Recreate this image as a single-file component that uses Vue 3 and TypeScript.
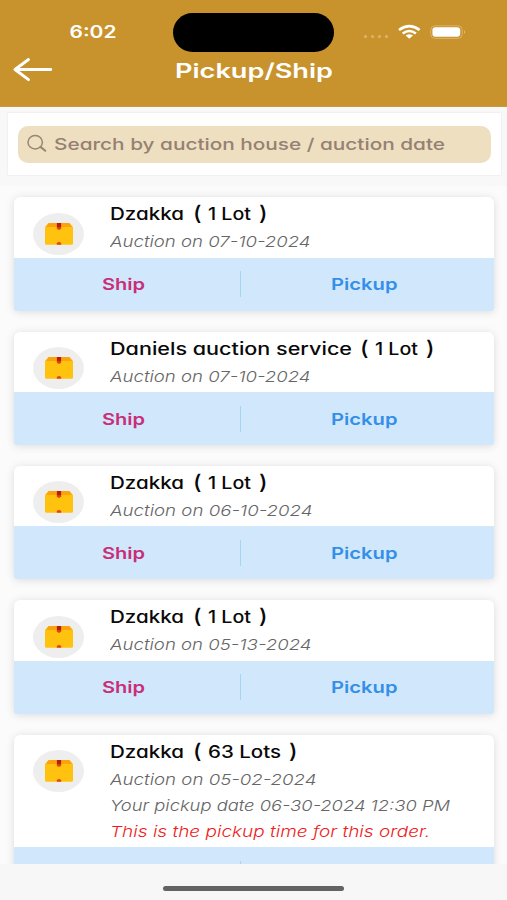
<script setup lang="ts">
interface Segment {
  text: string
  x: number
  width: number
  paren?: boolean
}
interface Line {
  text: string
  width: number
  alert?: boolean
}
interface Order {
  title: Segment[]
  lines: Line[]
  collapsed?: boolean
}

const oneLot = (x: number): Segment[] => [
  { text: '(', x, width: 8.5, paren: true },
  { text: '1 Lot', x: x + 15, width: 43 },
  { text: ')', x: x + 66, width: 8.5, paren: true },
]
const dzakka: Segment = { text: 'Dzakka', x: 0, width: 74 }

const orders: Order[] = [
  { title: [dzakka, ...oneLot(83)], lines: [{ text: 'Auction on 07-10-2024', width: 200.5 }] },
  {
    title: [{ text: 'Daniels auction service', x: 0, width: 242 }, ...oneLot(250)],
    lines: [{ text: 'Auction on 07-10-2024', width: 200.5 }],
  },
  { title: [dzakka, ...oneLot(83)], lines: [{ text: 'Auction on 06-10-2024', width: 202.5 }] },
  { title: [dzakka, ...oneLot(83)], lines: [{ text: 'Auction on 05-13-2024', width: 201.5 }] },
  {
    title: [
      dzakka,
      { text: '(', x: 83, width: 8.5, paren: true },
      { text: '63 Lots', x: 98, width: 73 },
      { text: ')', x: 179, width: 8.5, paren: true },
    ],
    lines: [
      { text: 'Auction on 05-02-2024', width: 206.5 },
      { text: 'Your pickup date 06-30-2024 12:30 PM', width: 340 },
      { text: 'This is the pickup time for this order.', width: 320, alert: true },
    ],
    collapsed: true,
  },
]
</script>

<template>
  <main class="screen">
    <header class="header">
      <div class="status">
        <svg class="clock" width="50" height="24">
          <text x="0.5" y="18" textLength="47" lengthAdjust="spacingAndGlyphs">6:02</text>
        </svg>
        <div class="island"></div>
        <svg class="indicators" width="106" height="24" viewBox="0 0 106 24">
          <g fill="#dcb468">
            <circle cx="3.5" cy="16.5" r="1.6" /><circle cx="10.5" cy="16.5" r="1.6" />
            <circle cx="17.5" cy="16.5" r="1.6" /><circle cx="24.5" cy="16.5" r="1.6" />
          </g>
          <g fill="none" stroke="#fff" stroke-width="2.6">
            <path d="M37 10Q47.3 2.4 57.6 10" />
            <path d="M40.7 13.6Q47.3 8.4 53.9 13.6" />
          </g>
          <path d="M43.6 15.6Q47.3 13 51 15.6L47.3 18.8Z" fill="#fff" />
          <rect x="68.8" y="5.8" width="31.4" height="12.6" rx="4" fill="none" stroke="#d9b369" />
          <rect x="70.4" y="7.2" width="27.8" height="9.6" rx="3" fill="#fff" />
          <path d="M102 10.2Q104.4 12 102 13.8Z" fill="#dfbd7e" />
        </svg>
      </div>
      <div class="nav">
        <svg class="back" width="42" height="28" viewBox="0 0 42 28">
          <path d="M16.5 3.5L3 13.5L16.5 23.7M3 13.5H38.8" fill="none" stroke="#fff" stroke-width="2.9" stroke-linecap="round" stroke-linejoin="round" />
        </svg>
        <svg class="heading" width="160" height="28">
          <text x="0" y="22" textLength="158" lengthAdjust="spacingAndGlyphs">Pickup/Ship</text>
        </svg>
      </div>
    </header>

    <section class="search-area">
      <div class="search-panel">
        <div class="search-box">
          <svg width="22" height="20" viewBox="0 0 22 20" fill="none" stroke="#998574" stroke-width="1.5" stroke-linecap="round">
            <ellipse cx="8.2" cy="8.2" rx="7.2" ry="6.7" />
            <path d="M13.5 12.9L18.3 16.8" stroke-width="2" />
          </svg>
          <svg class="placeholder" width="394" height="28">
            <text x="0" y="19.7" textLength="391" lengthAdjust="spacingAndGlyphs">Search by auction house / auction date</text>
          </svg>
        </div>
      </div>
    </section>

    <section class="list">
      <article v-for="(order, i) in orders" :key="i" class="card">
        <div class="summary">
          <div class="avatar">
            <svg width="28" height="22" viewBox="0 0 28 22">
              <path d="M3.5 0H24.5L28 4V20.5Q28 21.7 26.5 21.7H1.5Q0 21.7 0 20.5V4Z" fill="#ffc20e" />
              <path d="M3.8 0H24.2L27 4H1Z" fill="#fba30d" />
              <path d="M11.8 0H16.2V5.8L14 7L11.8 5.8Z" fill="#e0480f" />
              <path d="M12 0H16V4.2H12Z" fill="#b3200f" />
              <path d="M11.8 21.7V20L14 18.8L16.2 20V21.7Z" fill="#e5431b" />
            </svg>
          </div>
          <div class="details">
            <svg class="title" width="380" height="34">
              <text
                v-for="(part, p) in order.title"
                :key="p"
                :class="{ paren: part.paren }"
                :x="part.x"
                y="23.3"
                :textLength="part.width"
                lengthAdjust="spacingAndGlyphs"
              >{{ part.text }}</text>
            </svg>
            <svg
              v-for="line in order.lines"
              :key="line.text"
              class="line"
              :class="{ alert: line.alert }"
              width="380"
              height="26"
            >
              <text x="0" y="16.2" :textLength="line.width" lengthAdjust="spacingAndGlyphs">{{ line.text }}</text>
            </svg>
          </div>
        </div>
        <div class="actions">
          <div class="action">
            <svg v-if="!order.collapsed" class="ship" width="44" height="26">
              <text x="0" y="18.8" textLength="43" lengthAdjust="spacingAndGlyphs">Ship</text>
            </svg>
          </div>
          <span class="divider"></span>
          <div class="action">
            <svg v-if="!order.collapsed" class="pickup" width="68" height="26">
              <text x="0" y="18.8" textLength="66.5" lengthAdjust="spacingAndGlyphs">Pickup</text>
            </svg>
          </div>
        </div>
      </article>
    </section>

    <footer class="home"><span></span></footer>
  </main>
</template>

<style>
body {
  margin: 0;
  overflow: hidden;
}
</style>

<style scoped>
.screen {
  width: 507px;
  height: 900px;
  display: flex;
  flex-direction: column;
  overflow: hidden;
  background: #fbfbfb;
  font-family: Inter, "Open Sans", sans-serif;
  font-feature-settings: "cv11";
}
svg {
  display: block;
  flex: none;
}
.header {
  box-sizing: border-box;
  height: 107px;
  flex: none;
  padding-top: 12px;
  background: #c8932c;
  border-bottom: 1px solid #c49a48;
}
.status {
  height: 40px;
  display: flex;
  align-items: center;
}
.clock {
  margin-left: 69px;
  font-size: 17px;
  font-weight: 600;
  fill: #fff;
}
.island {
  width: 161px;
  height: 39px;
  margin-left: 54px;
  border-radius: 20px;
  background: #000;
}
.indicators {
  margin-left: 28px;
}
.nav {
  display: flex;
  padding: 4px 0 0 12px;
}
.heading {
  margin-left: 121px;
  font-size: 20px;
  font-weight: 600;
  fill: #fff;
}
.search-area {
  box-sizing: border-box;
  height: 79px;
  flex: none;
  padding: 6px 6px 0 8px;
  background: #f8f8f8;
}
.search-panel {
  box-sizing: border-box;
  height: 62px;
  padding: 12.5px 10.5px 0 9.5px;
  background: #fff;
  box-shadow: 0 0 2px rgba(0, 0, 0, 0.09);
}
.search-box {
  box-sizing: border-box;
  height: 37.5px;
  display: flex;
  align-items: center;
  gap: 5.5px;
  padding-left: 9px;
  border-radius: 10px;
  background: #eddfbf;
}
.placeholder {
  font-size: 16.5px;
  font-weight: 500;
  fill: #948174;
}
.list {
  flex: 1;
  min-height: 0;
  overflow: hidden;
  display: flex;
  flex-direction: column;
  gap: 20.9px;
  padding: 11.2px 13px 0 13.5px;
}
.card {
  flex: none;
  border-radius: 6px 6px 2px 2px;
  background: #fff;
  box-shadow: 0 1px 9px rgba(0, 0, 0, 0.13);
}
.summary {
  display: flex;
  padding-bottom: 0.5px;
}
.avatar {
  width: 51px;
  height: 42px;
  margin: 15.5px 0 0 19.5px;
  border-radius: 50%;
  background: #eee;
  display: flex;
  align-items: center;
  justify-content: center;
}
.details {
  margin-left: 26px;
}
.title {
  font-size: 17px;
  font-weight: 500;
  fill: #090909;
}
.title .paren {
  font-size: 20px;
}
.line {
  font-size: 15px;
  font-style: italic;
  font-weight: 300;
  fill: #666;
}
.line.alert {
  fill: #f01c1c;
}
.actions {
  height: 53px;
  display: flex;
  align-items: center;
  background: #d1e8fc;
  border-radius: 0 0 2px 2px;
}
.action {
  flex: 1;
  padding-left: 88px;
  font-size: 16.5px;
  font-weight: 600;
}
.ship {
  fill: #c72f79;
}
.divider {
  width: 1.5px;
  height: 26px;
  margin-right: -12px;
  margin-left: -12px;
  background: #a6d5ee;
}
.action:first-child {
  flex: none;
  width: 150px;
}
.action:last-child {
  padding-left: 101.5px;
}
.pickup {
  fill: #348fe8;
}
.home {
  box-sizing: border-box;
  height: 36.5px;
  flex: none;
  display: flex;
  justify-content: center;
  padding-top: 22.5px;
  background: #f7f7f7;
}
.home span {
  width: 181px;
  height: 5px;
  border-radius: 3px;
  background: #636363;
}
</style>
